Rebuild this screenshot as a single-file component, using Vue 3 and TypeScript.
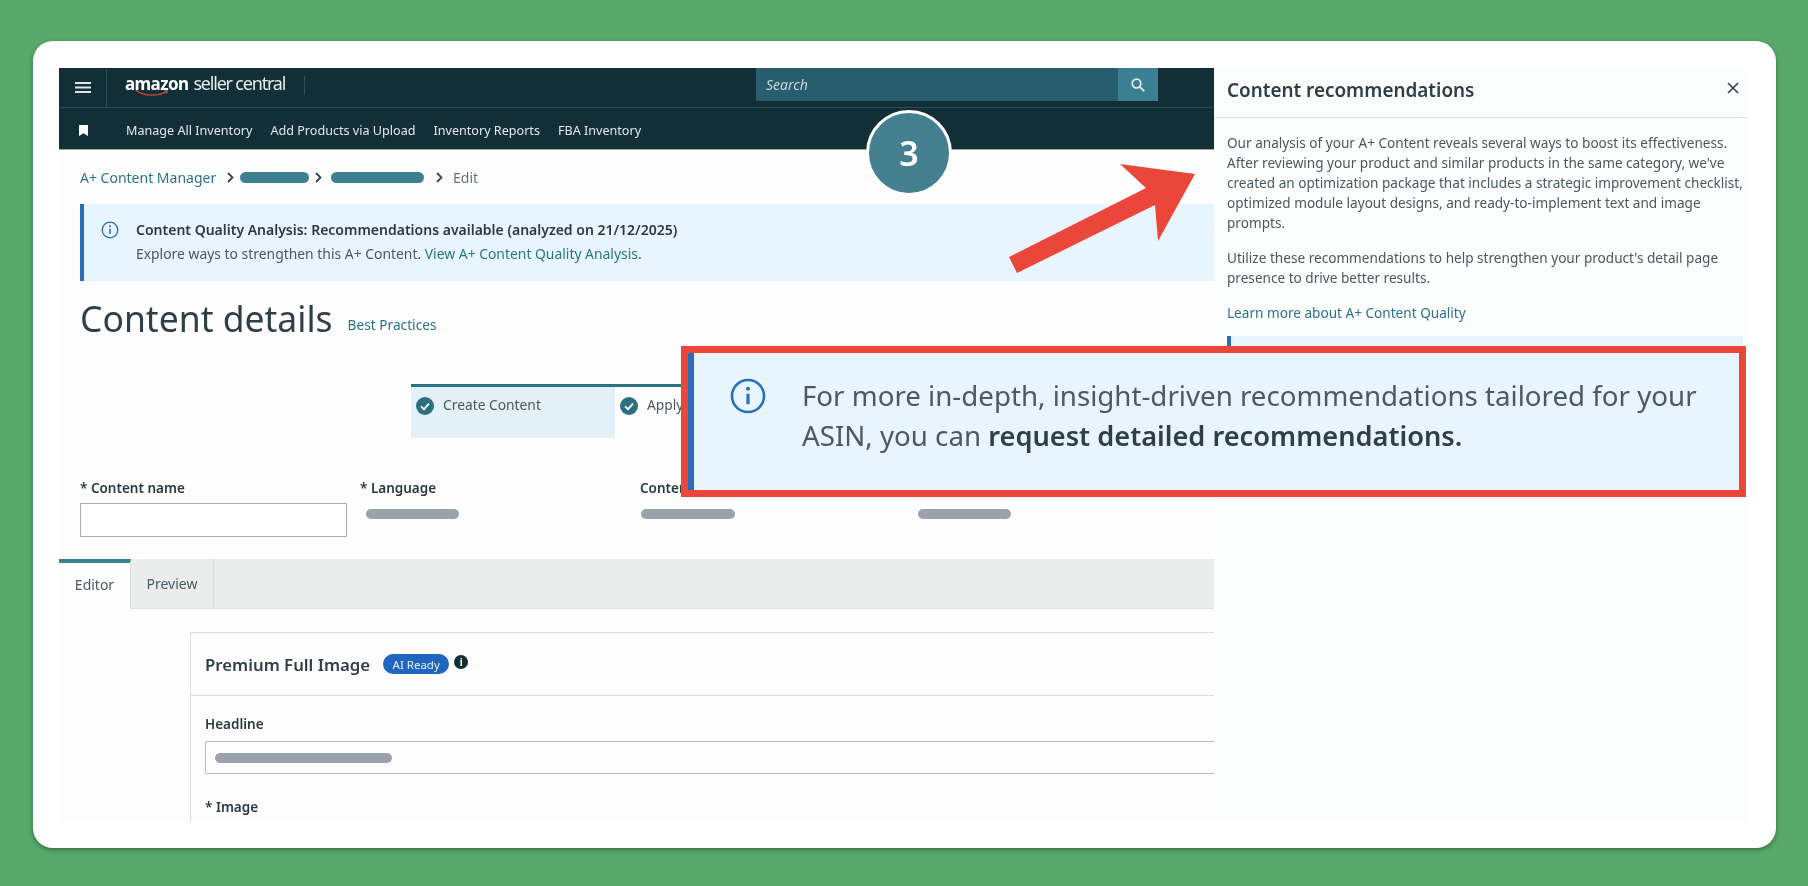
<script setup lang="ts">
const navLinks = ['Manage All Inventory', 'Add Products via Upload', 'Inventory Reports', 'FBA Inventory'];
const fieldPills = [
  { label: '* Language', width: 93, inset: 6, column: 280 },
  { label: 'Content type', width: 94, inset: 1, column: 278 },
  { label: '', width: 93, inset: 0, column: 278 },
];
const introLines = [
  'Our analysis of your A+ Content reveals several ways to boost its effectiveness.',
  "After reviewing your product and similar products in the same category, we've",
  'created an optimization package that includes a strategic improvement checklist,',
  'optimized module layout designs, and ready-to-implement text and image',
  'prompts.',
];
const outroLines = [
  "Utilize these recommendations to help strengthen your product's detail page",
  'presence to drive better results.',
];
</script>

<template>
  <div class="page">
    <div class="card">
      <div class="shot">
        <div class="main">
          <header class="topbar">
            <div class="burger">
              <svg width="16" height="11" viewBox="0 0 16 11"><path d="M0 1h16M0 5.500h16M0 10h16" stroke="#dfe5e6" stroke-width="1.800" /></svg>
            </div>
            <div class="logo">
              <span class="logo-amazon">amazon</span>
              <span class="logo-seller">seller central</span>
              <svg class="smile" width="36" height="8" viewBox="0 0 36 8">
                <path d="M1 1.500C10 7.500 22 7.500 31 3" fill="none" stroke="#d9483b" stroke-width="1.300" />
                <path d="M29 1.500l4-.5-1 4z" fill="#8f6a4a" />
              </svg>
            </div>
            <div class="logo-rule"></div>
            <div class="search">
              <span class="search-text">Search</span>
              <span class="search-btn">
                <svg width="16" height="16" viewBox="0 0 16 16" fill="none" stroke="#e8eff1" stroke-width="1.700">
                  <circle cx="6.500" cy="6.500" r="4.300" />
                  <path d="M9.800 9.800l4.400 4.400" />
                </svg>
              </span>
            </div>
          </header>
          <nav class="navbar">
            <svg class="bookmark" width="9" height="11" viewBox="0 0 9 11"><path d="M0 0h9v11L4.500 8.200 0 11z" fill="#fff" /></svg>
            <a v-for="link in navLinks" :key="link" class="nav-link">{{ link }}</a>
          </nav>

          <div class="crumbs">
            <span class="crumb-link">A+ Content Manager</span>
            <svg class="chev" width="7" height="11" viewBox="0 0 7 11"><path d="M1 1l4.500 4.500L1 10" fill="none" stroke="#37474f" stroke-width="1.800" /></svg>
            <span class="crumb-pill crumb-pill-a"></span>
            <svg class="chev" width="7" height="11" viewBox="0 0 7 11"><path d="M1 1l4.500 4.500L1 10" fill="none" stroke="#37474f" stroke-width="1.800" /></svg>
            <span class="crumb-pill crumb-pill-b"></span>
            <svg class="chev" width="7" height="11" viewBox="0 0 7 11"><path d="M1 1l4.500 4.500L1 10" fill="none" stroke="#37474f" stroke-width="1.800" /></svg>
            <span class="crumb-edit">Edit</span>
          </div>

          <section class="alert">
            <svg class="alert-icon" width="18" height="18" viewBox="0 0 18 18" fill="none">
              <circle cx="9" cy="9" r="7.800" stroke="#2a6ebb" stroke-width="1.300" />
              <circle cx="9" cy="5.300" r="1" fill="#2a6ebb" />
              <path d="M9 7.800v5.200" stroke="#2a6ebb" stroke-width="1.600" />
            </svg>
            <div>
              <p class="alert-title">Content Quality Analysis: Recommendations available (analyzed on 21/12/2025)</p>
              <p class="alert-body">Explore ways to strengthen this A+ Content. <span class="link">View A+ Content Quality Analysis.</span></p>
            </div>
          </section>

          <div class="title-row">
            <h1>Content details</h1>
            <span class="link best">Best Practices</span>
          </div>

          <div class="stepper">
            <div class="step step-active">
              <svg width="18" height="18" viewBox="0 0 18 18"><circle cx="9" cy="9" r="9" fill="#2b6f82" /><path d="M5 9.300l3 2.800 5-5.500" fill="none" stroke="#fff" stroke-width="1.800" /></svg>
              <span class="step-label">Create Content</span>
            </div>
            <div class="step">
              <svg width="18" height="18" viewBox="0 0 18 18"><circle cx="9" cy="9" r="9" fill="#2b6f82" /><path d="M5 9.300l3 2.800 5-5.500" fill="none" stroke="#fff" stroke-width="1.800" /></svg>
              <span class="step-label">Apply ASIN</span>
            </div>
          </div>

          <div class="fields">
            <div class="field field-name">
              <label>* Content name</label>
              <div class="text-input"></div>
            </div>
            <div v-for="field in fieldPills" :key="field.column + field.label" class="field" :style="{ width: field.column + 'px' }">
              <label>{{ field.label || '&nbsp;' }}</label>
              <span class="grey-pill" :style="{ width: field.width + 'px', marginLeft: field.inset + 'px' }"></span>
            </div>
          </div>

          <div class="tabs">
            <span class="tab tab-active">Editor</span>
            <span class="tab">Preview</span>
          </div>

          <div class="module">
            <div class="module-head">
              <h2>Premium Full Image</h2>
              <span class="badge">AI Ready</span>
              <span class="dot">i</span>
            </div>
            <div class="module-body">
              <label>Headline</label>
              <div class="headline-input"><span class="headline-pill"></span></div>
              <label class="image-label">* Image</label>
            </div>
          </div>
        </div>

        <aside class="panel">
          <div class="panel-head">
            <h3>Content recommendations</h3>
            <svg class="panel-close" width="12" height="12" viewBox="0 0 12 12"><path d="M1 1l10 10M11 1L1 11" stroke="#37474f" stroke-width="1.700" /></svg>
          </div>
          <div class="panel-body">
            <p class="panel-para"><span v-for="line in introLines" :key="line" class="line">{{ line }}</span></p>
            <p class="panel-para"><span v-for="line in outroLines" :key="line" class="line">{{ line }}</span></p>
            <p class="panel-link link">Learn more about A+ Content Quality</p>
            <div class="panel-alert"></div>
          </div>
        </aside>

        <!-- annotations drawn over the screenshot -->
        <div class="step-num">3</div>
        <svg class="arrow" width="190" height="112" viewBox="0 0 190 112">
          <path d="M188 12L113 2 139 26 2 95 10 111 148 43 151 79z" fill="#ea473a" />
        </svg>
        <div class="callout">
          <svg class="callout-icon" width="36" height="36" viewBox="0 0 36 36" fill="none">
            <circle cx="18" cy="18" r="16" stroke="#2a6ebb" stroke-width="2.600" />
            <circle cx="18" cy="10.800" r="2" fill="#2a6ebb" />
            <path d="M18 15.800v10.400" stroke="#2a6ebb" stroke-width="3.200" />
          </svg>
          <p>For more in-depth, insight-driven recommendations tailored for your<br />ASIN, you can <b>request detailed recommendations.</b></p>
        </div>
      </div>
    </div>
  </div>
</template>

<style>
html,
body {
  margin: 0;
  background: #58a96a;
}
</style>

<style scoped>
.page {
  width: 1808px;
  height: 886px;
  box-sizing: border-box;
  padding: 41px 32px 38px 33px;
  background: #58a96a;
  font-family: "Noto Sans", "Open Sans", sans-serif;
  color: #4a585e;
  overflow: hidden;
}

.card {
  height: 807px;
  box-sizing: border-box;
  padding: 27px 28px 26px 26px;
  background: #fff;
  border-radius: 20px;
  box-shadow: 0 2px 5px rgba(0, 0, 0, 0.35);
}

.shot {
  position: relative;
  display: flex;
  height: 754px;
  overflow: hidden;
  background: #fdfdfd;
  filter: blur(0.5px);
}

.main {
  width: 1155px;
  flex: none;
  overflow: hidden;
}

p,
h1,
h2,
h3 {
  margin: 0;
}

.link {
  color: #2b7486;
}

.topbar {
  display: flex;
  align-items: center;
  height: 39px;
  background: #122f37;
  border-bottom: 1px solid #2f4a52;
  box-sizing: content-box;
}

.burger {
  display: flex;
  align-items: center;
  justify-content: center;
  width: 48px;
  height: 39px;
  border-right: 1px solid #2f4a52;
  box-sizing: border-box;
}

.logo {
  position: relative;
  width: 197px;
  margin-top: -9px;
  padding-left: 18px;
  box-sizing: border-box;
  color: #fff;
  line-height: 28px;
  white-space: nowrap;
}

.logo-amazon {
  font-size: 17px;
  font-weight: 700;
  letter-spacing: -0.6px;
}

.logo-seller {
  margin-left: 5px;
  font-size: 18px;
  letter-spacing: -1.200px;
  color: #e6ecec;
}

.smile {
  position: absolute;
  left: 28px;
  top: 20px;
}

.logo-rule {
  width: 1px;
  height: 19px;
  margin-top: -5px;
  background: #33505a;
}

.search {
  display: flex;
  align-items: center;
  justify-content: space-between;
  width: 402px;
  height: 33px;
  margin-left: 451px;
  align-self: flex-start;
  background: #285d6d;
}

.search-text {
  margin-left: 10px;
  font-size: 14px;
  font-style: italic;
  color: #c6d6da;
}

.search-btn {
  display: flex;
  align-items: center;
  justify-content: center;
  width: 40px;
  height: 33px;
  background: #3c7f92;
}

.navbar {
  display: flex;
  align-items: center;
  height: 42px;
  background: #122f37;
  border-bottom: 1px solid #9aa5a8;
  padding: 3px 0 0 20px;
  box-sizing: border-box;
  gap: 18px;
}

.bookmark {
  margin-right: 20px;
}

.nav-link {
  font-size: 12.600px;
  color: #e2e8e9;
  white-space: nowrap;
}

.crumbs {
  display: flex;
  align-items: center;
  height: 20px;
  margin: 17px 0 0 21px;
  font-size: 14px;
}

.crumb-link {
  color: #2b7486;
  width: 135px;
  white-space: nowrap;
}

.chev {
  margin: 0 8px 0 12px;
}

.crumb-pill {
  height: 11px;
  border-radius: 6px;
  background: #3f8090;
}

.crumb-pill-a {
  width: 69px;
  margin-left: -2px;
}

.crumb-pill-a + .chev {
  margin: 0 9px 0 6px;
}

.crumb-pill-b {
  width: 93px;
}

.crumb-edit {
  color: #66757b;
  margin-left: 2px;
}

.alert {
  display: flex;
  height: 77px;
  margin: 17px 0 0 21px;
  padding-top: 16px;
  box-sizing: border-box;
  background: #e9f5fe;
  border-left: 4px solid #2a6ebb;
}

.alert-icon {
  margin: 1px 17px 0 17px;
}

.alert-title {
  font-size: 14px;
  font-weight: 600;
  line-height: 20px;
  color: #2b3a40;
  white-space: nowrap;
}

.alert-body {
  font-size: 13.900px;
  line-height: 20px;
  margin-top: 4px;
  white-space: nowrap;
}

.title-row {
  display: flex;
  align-items: flex-start;
  margin: 14px 0 0 21px;
  height: 46px;
}

h1 {
  font-size: 35.500px;
  font-weight: 400;
  line-height: 46px;
  color: #2e3f46;
}

.best {
  margin: 20px 0 0 15px;
  font-size: 13.700px;
  line-height: 20px;
}

.stepper {
  display: flex;
  margin: 43px 0 0 352px;
  border-top: 3px solid #2b7486;
}

.step {
  display: flex;
  align-items: flex-start;
  gap: 9px;
  width: 204px;
  height: 51px;
  padding: 10px 0 0 5px;
  box-sizing: border-box;
  font-size: 13.800px;
  line-height: 18px;
}

.step-label {
  margin-top: -1px;
}

.step-active {
  background: #e3f0f8;
}

.step:not(.step-active) {
  width: 300px;
}

.fields {
  display: flex;
  height: 59px;
  margin: 41px 0 0 21px;
}

.field {
  flex: none;
}

.field-name {
  width: 280px;
}

label {
  display: block;
  font-size: 13.500px;
  font-weight: 600;
  line-height: 18px;
  color: #2b3a40;
}

.text-input {
  width: 267px;
  height: 34px;
  margin-top: 6px;
  box-sizing: border-box;
  border: 1px solid #a6adb0;
  background: #fff;
}

.grey-pill {
  display: block;
  height: 10px;
  margin-top: 12px;
  border-radius: 5px;
  background: #9aa3ab;
}

.tabs {
  display: flex;
  height: 50px;
  margin-top: 21px;
  box-sizing: border-box;
  background: #ebeded;
  border-bottom: 1px solid #dcdfdf;
}

.tab {
  display: flex;
  align-items: center;
  justify-content: center;
  width: 82px;
  font-size: 14px;
  color: #4a5a60;
  border-right: 1px solid #dcdfdf;
}

.tab-active {
  width: 72px;
  height: 50px;
  padding-bottom: 4px;
  box-sizing: border-box;
  background: #fdfdfd;
  border-top: 4px solid #3b8294;
}

.module {
  min-height: 300px;
  margin: 23px 0 0 131px;
  border: solid #dadddd;
  border-width: 1px 0 0 1px;
}

.module-head {
  display: flex;
  align-items: center;
  height: 62px;
  padding-left: 14px;
  border-bottom: 1px solid #dadddd;
}

h2 {
  font-size: 16.800px;
  font-weight: 600;
  color: #2e3f46;
  white-space: nowrap;
}

.badge {
  display: flex;
  align-items: center;
  justify-content: center;
  width: 66px;
  height: 20px;
  margin-left: 13px;
  border-radius: 10px;
  background: #1f66c0;
  color: #e8f1fb;
  font-size: 11.500px;
}

.dot {
  display: flex;
  align-items: center;
  justify-content: center;
  width: 14px;
  height: 14px;
  margin: -4px 0 0 5px;
  border-radius: 50%;
  background: #122f37;
  color: #fff;
  font-size: 10px;
  font-weight: 700;
}

.module-body {
  padding: 19px 0 0 14px;
}

.headline-input {
  display: flex;
  align-items: center;
  height: 33px;
  margin-top: 8px;
  padding-left: 9px;
  box-sizing: border-box;
  border: 1px solid #b4babc;
  border-right: 0;
  border-radius: 2px 0 0 2px;
}

.headline-pill {
  width: 177px;
  height: 10px;
  border-radius: 5px;
  background: #9aa3ab;
}

.image-label {
  margin-top: 24px;
}

.panel {
  width: 534px;
  flex: none;
  background: #fcfdfd;
}

.panel-head {
  display: flex;
  align-items: center;
  justify-content: space-between;
  height: 43px;
  padding: 0 9px 6px 13px;
  box-sizing: content-box;
  border-bottom: 1px solid #dfe2e2;
}

.panel-close {
  margin-bottom: 3px;
}

h3 {
  font-size: 18.900px;
  font-weight: 600;
  color: #2e3f46;
}

.panel-body {
  padding: 15px 5px 0 13px;
}

.panel-para {
  margin-bottom: 15px;
  font-size: 13.600px;
  line-height: 20px;
}

.line {
  display: block;
  white-space: nowrap;
}

.panel-link {
  font-size: 13.600px;
  line-height: 20px;
}

.panel-alert {
  height: 80px;
  margin-top: 13px;
  background: #e9f5fe;
  border-left: 4px solid #2a6ebb;
}

.step-num {
  position: absolute;
  left: 807px;
  top: 42px;
  display: flex;
  align-items: center;
  justify-content: center;
  width: 86px;
  height: 86px;
  box-sizing: border-box;
  border: 3px solid #fff;
  border-radius: 50%;
  background: #44808f;
  color: #fff;
  font-size: 34px;
  font-weight: 600;
}

.arrow {
  position: absolute;
  left: 948px;
  top: 94px;
}

.callout {
  position: absolute;
  left: 622px;
  top: 278px;
  display: flex;
  width: 1065px;
  height: 151px;
  box-sizing: border-box;
  background: #e8f4fe;
  border: 7px solid #ea473a;
}

.callout::before {
  content: "";
  width: 6px;
  flex: none;
  background: #2a6ebb;
}

.callout-icon {
  margin: 25px 0 0 36px;
  flex: none;
}

.callout p {
  margin: 22px 0 0 36px;
  font-size: 27.700px;
  line-height: 40px;
  color: #4a5a62;
  white-space: nowrap;
}

.callout b {
  font-weight: 600;
  font-size: 27.200px;
  color: #2e3f46;
}
</style>
